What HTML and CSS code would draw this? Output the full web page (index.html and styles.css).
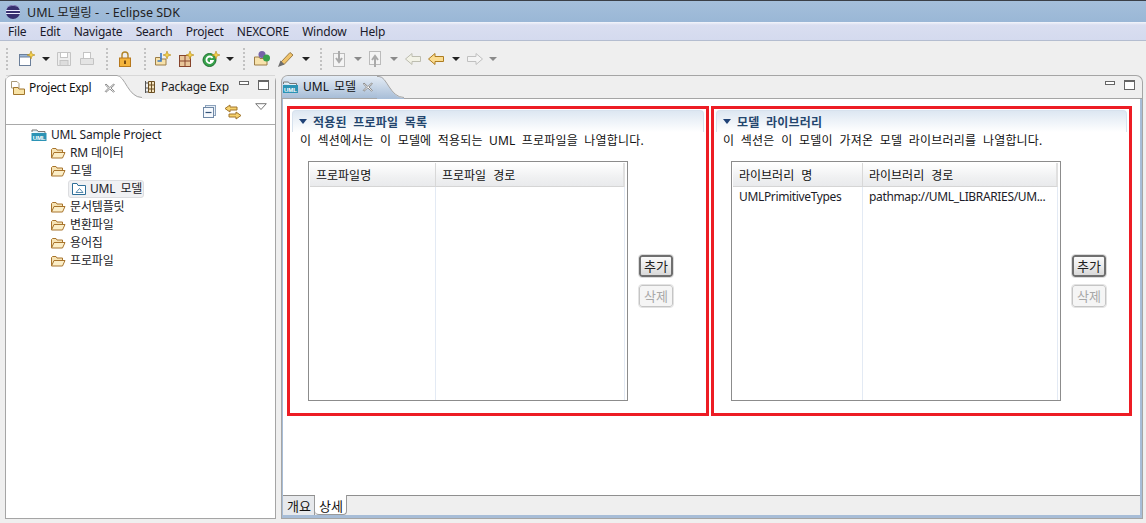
FILE: index.html
```html
<!DOCTYPE html>
<html lang="ko">
<head>
<meta charset="utf-8">
<title>UML 모델링 - Eclipse SDK</title>
<link rel="stylesheet" href="styles.css">
</head>
<body>
<svg class="defs" width="0" height="0">
  <defs>
    <linearGradient id="tabgrad" x1="0" y1="0" x2="0" y2="1"><stop offset="0" stop-color="#e4ecf5"/><stop offset="1" stop-color="#a7bdd7"/></linearGradient>
    <symbol id="folder" viewBox="0 0 16 16">
      <path d="M1.5 13V4.5L2.5 3.5H6L7 5H12.5V7" fill="#f6e3b4" stroke="#a8742c"/>
      <path d="M1.5 13L4 7.5H15L12.5 13Z" fill="#fbeec8" stroke="#a8742c"/>
    </symbol>
    <symbol id="uml" viewBox="0 0 16 16">
      <path d="M1 5V3H6L7 4.5H14V7" fill="#dff0f8" stroke="#777"/>
      <rect x="0.5" y="6" width="15" height="8" fill="#2c93b5"/>
      <text x="8" y="12.6" text-anchor="middle" class="umltxt">UML</text>
    </symbol>
    <symbol id="close" viewBox="0 0 12 12">
      <path d="M2 2L5.8 5.5L9.6 2L10.4 3L7 6L10.4 9.3L9.6 10.2L5.8 7L2 10.2L1.3 9.3L4.6 6L1.3 3Z" fill="#fff" stroke="#8c8c8c"/>
    </symbol>
    <symbol id="arrow" viewBox="0 0 18 16">
      <path d="M1.5 8L8 2.5V5.5H16.5V10.5H8V13.5Z" stroke-width="1"/>
    </symbol>
  </defs>
</svg>

<header class="titlebar">
  <svg class="logo" width="16" height="16" viewBox="0 0 16 16"><circle cx="8" cy="8" r="7" fill="#38306f"/><path d="M1 6.5H15M1 9.5H15" stroke="#eef" stroke-width="1.2"/><path d="M2 3.5C5 0.8 11 0.8 14 3.5" stroke="#8f87c0" fill="none"/></svg>
  <span>UML 모델링 -&nbsp; - Eclipse SDK</span>
</header>

<nav class="menubar">
  <span>File</span><span>Edit</span><span>Navigate</span><span>Search</span><span>Project</span><span>NEXCORE</span><span>Window</span><span>Help</span>
</nav>

<div class="toolbar">
  <i class="grip"></i>
  <svg class="ti first" width="18" height="18" viewBox="0 0 18 18"><rect x="1.5" y="4.5" width="11" height="11" fill="#fff" stroke="#6b7f9a"/><rect x="1.5" y="4.5" width="11" height="2.5" fill="#9db8d8" stroke="#6b7f9a"/><path d="M13 1L14 4L17 5L14 6L13 9L12 6L9 5L12 4Z" fill="#f5d14a" stroke="#b58c1e" stroke-width=".6"/></svg>
  <i class="drop"></i>
  <svg class="ti m7" width="16" height="16" viewBox="0 0 16 16"><path d="M1.5 1.5H14.5V14.5H1.5Z" fill="#eee" stroke="#c4c4c4"/><rect x="4.5" y="1.5" width="7" height="5" fill="#fff" stroke="#c4c4c4"/><rect x="4" y="9.5" width="8" height="5" fill="#ddd" stroke="#c4c4c4"/></svg>
  <svg class="ti" width="16" height="16" viewBox="0 0 16 16"><rect x="4.5" y="1.5" width="7" height="6" fill="#fff" stroke="#c4c4c4"/><path d="M1.5 7.5H14.5V13.5H1.5Z" fill="#e4e4e4" stroke="#c4c4c4"/></svg>
  <i class="grip g2"></i>
  <svg class="ti" width="16" height="18" viewBox="0 0 16 18"><path d="M5 8V5A3 3 0 0 1 11 5V8" fill="none" stroke="#b08428" stroke-width="1.4"/><rect x="2.5" y="8" width="11" height="8.5" fill="#f4b43c" stroke="#b7791d"/><rect x="7" y="10.5" width="2" height="3.5" fill="#7a4d10"/></svg>
  <i class="grip g3"></i>
  <svg class="ti m6" width="18" height="18" viewBox="0 0 18 18"><path d="M1.5 15V7.5H6L7 9H12V15Z" fill="#f7e2ab" stroke="#9c7d46"/><path d="M7 3V11H3.5" fill="none" stroke="#3a78c2" stroke-width="1.6"/><path d="M13 1L14 4L17 5L14 6L13 9L12 6L9 5L12 4Z" fill="#f5d14a" stroke="#b58c1e" stroke-width=".6"/></svg>
  <svg class="ti m8" width="16" height="18" viewBox="0 0 16 18"><rect x="1.5" y="5.5" width="11" height="11" fill="#e8c69a" stroke="#87452c"/><path d="M7 5.5V16.5M1.5 11H12.5" stroke="#87452c"/><path d="M12 1L13 4L16 5L13 6L12 9L11 6L8 5L11 4Z" fill="#f5d14a" stroke="#b58c1e" stroke-width=".6"/></svg>
  <svg class="ti m3" width="18" height="18" viewBox="0 0 18 18"><circle cx="7.5" cy="10" r="6.5" fill="#36a24a" stroke="#1f6e2f"/><path d="M10.5 8A3.3 3.3 0 1 0 10.8 11H8" fill="none" stroke="#fff" stroke-width="1.8"/><path d="M14 1L15 4L18 5L15 6L14 9L13 6L10 5L13 4Z" fill="#f5d14a" stroke="#b58c1e" stroke-width=".6"/></svg>
  <i class="drop"></i>
  <i class="grip g4"></i>
  <svg class="ti m6" width="18" height="18" viewBox="0 0 18 18"><path d="M1.5 15V7H6L7 8.5H14V15Z" fill="#f7e2ab" stroke="#9c7d46"/><circle cx="9" cy="4.5" r="3.5" fill="#7562a8"/><circle cx="13.5" cy="8" r="3.5" fill="#38a04c"/></svg>
  <svg class="ti" width="18" height="18" viewBox="0 0 18 18"><path d="M4 12L13 2.5L16 5L7 14.5Z" fill="#f0c36a" stroke="#9c7d46"/><path d="M1 17L3.5 10.5L7.5 14.5Z" fill="#6e6e6e"/></svg>
  <i class="drop"></i>
  <i class="grip g5"></i>
  <svg class="ti dim" width="16" height="18" viewBox="0 0 16 18"><rect x="2.5" y="3.5" width="11" height="13" fill="#f4f4f4" stroke="#bbb"/><path d="M8 1V11M5 8L8 12L11 8" fill="none" stroke="#aaa" stroke-width="2"/></svg>
  <i class="drop dimd"></i>
  <svg class="ti dim l1" width="16" height="18" viewBox="0 0 16 18"><rect x="2.5" y="1.5" width="11" height="13" fill="#f4f4f4" stroke="#bbb"/><path d="M8 17V7M5 10L8 6L11 10" fill="none" stroke="#aaa" stroke-width="2"/></svg>
  <i class="drop dimd"></i>
  <svg class="ti back-dim" width="18" height="16"><use href="#arrow"/></svg>
  <svg class="ti back" width="18" height="16"><use href="#arrow"/></svg>
  <i class="drop"></i>
  <svg class="ti fwd" width="18" height="16"><use href="#arrow"/></svg>
  <i class="drop dimd"></i>
</div>

<main class="workbench">
  <aside class="pane left">
    <div class="tabhead">
      <div class="tab active">
        <svg class="tabicon" width="16" height="16" viewBox="0 0 16 16"><path d="M1.5 1.5H7L9 3.5V8H1.5Z" fill="#fff" stroke="#a99a7a"/><path d="M3.5 14.5V7.5H8L9 9H14.5V14.5Z" fill="#f8e3a6" stroke="#a0752c"/></svg>
        <span>Project Expl</span>
        <svg class="x" width="12" height="12"><use href="#close"/></svg>
      </div>
      <svg class="curve" width="27" height="24" viewBox="0 0 27 24"><path d="M0 0H2C10 0 13 23 27 23V24H0Z" fill="#fff"/><path d="M0 .5H2C10 .5 13 22.5 27 22.5" fill="none" stroke="#a5a5a5"/></svg>
      <div class="tab other">
        <svg class="tabicon pkg" width="12" height="14" viewBox="0 0 12 14"><path d="M1.5 1V13M1.5 3H4M1.5 8H4M1.5 12H4" stroke="#555" fill="none"/><path d="M4.5 1.5H10.5V12.5H4.5ZM4.5 5H10.5M4.5 9H10.5M7.5 1.5V12.5" fill="#f3e2bd" stroke="#6b4f23"/></svg>
        <span>Package Exp</span>
      </div>
      <div class="winbtns">
        <i class="min"></i><i class="max"></i>
      </div>
    </div>
    <div class="viewbar">
      <svg width="15" height="15" viewBox="0 0 15 15"><rect x="3.5" y="1.5" width="10" height="10" fill="#e6eef7" stroke="#8ca2bb"/><rect x="1.5" y="3.5" width="10" height="10" fill="#f6f9fd" stroke="#6f88a5"/><path d="M3.5 8.5H9.5" stroke="#35547a" stroke-width="1.2"/></svg>
      <svg class="link" width="18" height="16" viewBox="0 0 18 16"><path d="M1 4.5L6 1V3H13V6H6V8Z" fill="#f6d26d" stroke="#a0752c"/><path d="M17 11.5L12 8V10H5V13H12V15Z" fill="#f6d26d" stroke="#a0752c"/></svg>
      <svg class="menu" width="12" height="8" viewBox="0 0 12 8"><path d="M.7 .7H11.3L6 6.5Z" fill="#fff" stroke="#777"/></svg>
    </div>
    <ul class="tree">
      <li class="lv0"><svg width="18" height="16"><use href="#uml"/></svg><span>UML Sample Project</span></li>
      <li class="lv1"><svg width="16" height="16"><use href="#folder"/></svg><span>RM 데이터</span></li>
      <li class="lv1"><svg width="16" height="16"><use href="#folder"/></svg><span>모델</span></li>
      <li class="lv2"><div class="sel"><svg width="16" height="14" viewBox="0 0 16 14"><path d="M1.5 12.5V1.5H6L7 3.5H14.5V12.5Z" fill="#fff" stroke="#2f6f99"/><path d="M5 10.5L8.5 6.5L12 10.5Z" fill="none" stroke="#2f6f99" stroke-width=".8"/></svg><span>UML 모델</span></div></li>
      <li class="lv1"><svg width="16" height="16"><use href="#folder"/></svg><span>문서템플릿</span></li>
      <li class="lv1"><svg width="16" height="16"><use href="#folder"/></svg><span>변환파일</span></li>
      <li class="lv1"><svg width="16" height="16"><use href="#folder"/></svg><span>용어집</span></li>
      <li class="lv1"><svg width="16" height="16"><use href="#folder"/></svg><span>프로파일</span></li>
    </ul>
  </aside>

  <section class="pane editor">
    <div class="tabhead ehead">
      <div class="tab etab">
        <svg class="tabicon" width="17" height="16"><use href="#uml"/></svg>
        <span>UML 모델</span>
        <svg class="x" width="12" height="12"><use href="#close"/></svg>
      </div>
      <svg class="curve" width="27" height="23" viewBox="0 0 27 23"><path d="M0 0H2C10 0 13 22 27 22V23H0Z" fill="url(#tabgrad)"/><path d="M0 .5H2C10 .5 13 21.5 27 21.5" fill="none" stroke="#a5a5a5"/></svg>
      <div class="winbtns ewin"><i class="min"></i><i class="max"></i></div>
    </div>
    <div class="editbody">
      <div class="sections">
        <section class="redbox box1">
          <h2 class="sechead"><i class="twisty"></i>적용된 프로파일 목록</h2>
          <p class="desc">이 섹션에서는 이 모델에 적용되는 UML 프로파일을 나열합니다.</p>
          <div class="rowwrap">
            <div class="table t1">
              <div class="thead"><div class="c1">프로파일명</div><div class="c2">프로파일 경로</div></div>
              <div class="tbody"><div class="c1"></div><div class="c2"></div></div>
            </div>
            <div class="btns"><button class="btn focus">추가</button><button class="btn" disabled>삭제</button></div>
          </div>
        </section>
        <section class="redbox">
          <h2 class="sechead"><i class="twisty"></i>모델 라이브러리</h2>
          <p class="desc">이 섹션은 이 모델이 가져온 모델 라이브러리를 나열합니다.</p>
          <div class="rowwrap">
            <div class="table t2">
              <div class="thead"><div class="c1">라이브러리 명</div><div class="c2">라이브러리 경로</div></div>
              <div class="tbody"><div class="c1">UMLPrimitiveTypes</div><div class="c2">pathmap://UML_LIBRARIES/UM...</div></div>
            </div>
            <div class="btns"><button class="btn focus">추가</button><button class="btn" disabled>삭제</button></div>
          </div>
        </section>
      </div>
      <div class="pagetabs"><span class="ptab">개요</span><span class="ptab on">상세</span></div>
    </div>
  </section>
</main>
</body>
</html>
```

FILE: styles.css
```css
* { box-sizing: border-box; }
html, body { margin: 0; height: 100%; }
body {
  width: 1146px; height: 523px; overflow: hidden;
  background: #efefef; color: #111;
  font: 12px/16px "Noto Sans", "Noto Sans CJK KR", sans-serif;
  display: flex; flex-direction: column;
}
.defs { position: absolute; }
.umltxt { font: bold 6px "Liberation Sans", sans-serif; fill: #fff; }

.titlebar {
  height: 22px; flex: none; display: flex; align-items: center; gap: 6px;
  padding: 1px 0 0 5px; color: #222; font-size: 12.5px;
  border-top: 1px solid #3a3f47;
  background: linear-gradient(#a4bfdb, #9ab7d6);
}
.titlebar span { padding-top: 1px; }
.menubar {
  height: 19px; flex: none; display: flex; gap: 13.3px; align-items: center;
  padding: 1px 0 0 8px; color: #1a1a2a; letter-spacing: -.2px;
  background: linear-gradient(#f3f5fb 0, #d9def0 3px, #d4daee 100%);
  border-bottom: 1px solid #b4bdd0;
}
.toolbar {
  height: 34px; flex: none; display: flex; align-items: center;
  padding: 1px 0 0 6px; background: #efefef;
}
.grip { width: 2px; height: 22px; flex: none; background: repeating-linear-gradient(#c2c2c2 0 2px, transparent 2px 4px); }
.ti { flex: none; margin-right: 4px; }
.ti.first { margin-left: 10px; margin-right: 3px; }
.ti.m3 { margin-right: 3px; }
.ti.m6 { margin-right: 6px; }
.ti.m7 { margin-right: 7px; }
.ti.m8 { margin-right: 8px; }
.ti.l1 { margin-left: -1px; }
.drop { width: 0; height: 0; flex: none; margin: 0 6px 0 3px; border: 4px solid transparent; border-top: 4px solid #222; border-bottom: 0; }
.dimd { border-top-color: #8a8a8a; }
.g2 { margin: 0 9px 0 7px; }
.g3 { margin: 0 8px 0 7px; }
.g4 { margin: 0 8px 0 3px; }
.g5 { margin: 0 9px 0 4px; }
.back-dim { fill: #f2f2e6; stroke: #bdbdb0; margin-right: 5px; }
.back { fill: #fbdc90; stroke: #ad7c20; }
.ti.fwd { fill: #f4f4f4; stroke: #c0c0c0; transform: scaleX(-1); margin-right: 2px; }

.workbench { flex: 1; display: flex; gap: 5px; padding: 0 3px 4px 5px; min-height: 0; }
.pane { display: flex; flex-direction: column; min-width: 0; }
.left { width: 271px; flex: none; border: 1px solid #a5a5a5; border-top: 0; background: #fff; border-radius: 6px 6px 0 0; }
.editor { flex: 1; }

.tabhead { height: 24px; display: flex; align-items: flex-start; background: #efefef; flex: none; position: relative; }
.tab { display: flex; align-items: center; height: 24px; flex: none; }
.active { width: 110px; padding: 0 0 0 4px; background: #fff; border-top: 1px solid #a5a5a5; border-radius: 6px 0 0 0; }
.active span { margin-left: 3px; width: 72px; letter-spacing: -.3px; }
.tabicon { flex: none; }
.curve { flex: none; margin-left: -1px; display: block; }
.other { height: 23px; padding-left: 1px; color: #222; }
.other span { margin-left: 5px; letter-spacing: -.25px; }
.pkg { margin-left: 1px; }
.left .tabhead { box-shadow: inset 0 1px #d8d8d8; }
.left .active .x { margin-left: 3px; }
.winbtns { margin-left: auto; display: flex; gap: 9px; align-items: center; padding: 5px 6px 0 0; }
.min { display: block; width: 10px; height: 4px; border: 1px solid #666; background: #fff; margin-bottom: 5px; }
.max { display: block; width: 11px; height: 10px; border: 1px solid #666; border-top-width: 2px; background: #fff; }

.viewbar { height: 26px; flex: none; display: flex; align-items: center; justify-content: flex-end; padding: 0 8px 0 0; gap: 7px; background: #fff; border-bottom: 1px solid #a9a9a9; }
.viewbar .menu { margin: 0 0 10px 6px; }

.tree { list-style: none; margin: 0; padding: 0; flex: 1; background: #fff; }
.tree li { height: 18px; display: flex; align-items: center; gap: 3px; white-space: nowrap; color: #1c1c28; letter-spacing: -.15px; }
.tree .lv0 { height: 19px; padding-left: 24px; }
.lv1 { padding-left: 44px; }
.lv1 span { margin-left: 1px; }
.lv2 { padding-left: 62px; }
.sel { display: flex; align-items: center; gap: 3px; height: 18px; padding: 0 1px 0 2px; background: #f0f1f3; border: 1px solid #dcdde0; border-radius: 3px; word-spacing: 2px; }

.ehead { height: 23px; background: #efefef; border-top: 1px solid #a5a5a5; border-radius: 7px 7px 0 0; border-right: 1px solid #a5a5a5; }
.etab { height: 22px; width: 97px; background: linear-gradient(#e4ecf5, #a7bdd7); border-left: 1px solid #a5a5a5; border-radius: 6px 0 0 0; }
.etab span { margin-left: 4px; word-spacing: 2px; }
.etab .x { margin-left: 6px; }
.ehead .winbtns { padding: 4px 7px 0 0; }

.editbody {
  flex: 1; display: flex; flex-direction: column; min-height: 0;
  border: solid #a7bdd7; border-width: 1px 3px 4px 2px;
  background: #fff; outline: 1px solid #a5a5a5; outline-offset: -1px;
  border-top-color: #a5a5a5; padding-top: 2px;
}
.sections { flex: 1; display: flex; gap: 2px; padding: 5px 5px 0 4px; align-items: flex-start; }
.redbox { width: 421px; height: 310px; border: 3px solid #ed1c24; padding: 1px 2px; flex: none; }
.box1 { width: 422px; }
.sechead {
  margin: 0; height: 22px; display: flex; align-items: center; gap: 6px; padding: 0 0 0 5px;
  font: bold 12px/16px "Noto Sans CJK KR", sans-serif; color: #24466e;
  letter-spacing: .2px; word-spacing: 3px;
  border: 1px solid #d7e2ee; border-bottom: 0; border-radius: 4px 4px 0 0;
  background: linear-gradient(#dde7f2, #fff);
}
.twisty { width: 0; height: 0; border: 4px solid transparent; border-top: 5px solid #1f4277; border-bottom: 0; margin-left: 1px; }
.desc { margin: 0; padding: 1px 0 0 7px; height: 29px; color: #111; white-space: nowrap; letter-spacing: .2px; word-spacing: 3.3px; }
.box1 .desc { padding-left: 8px; word-spacing: 3px; }
.rowwrap { display: flex; padding-left: 15px; }
.box1 .rowwrap { padding-left: 16px; }
.table { height: 240px; border: 1px solid #8c8c8c; display: flex; flex-direction: column; background: #fff; padding: 1px 2px 0 1px; }
.t1 { width: 320px; }
.t2 { width: 330px; }
.thead { height: 24px; display: flex; flex: none; align-items: stretch; background: linear-gradient(#fff, #f0f1f2 60%, #e9eaec); border-bottom: 1px solid #d5d5d5; border-right: 2px solid #e0e0e0; word-spacing: 4px; }
.thead div { display: flex; align-items: center; padding: 2px 0 0 6px; }
.tbody { flex: 1; display: flex; }
.tbody div { padding: 2px 0 0 6px; white-space: nowrap; color: #1c1c28; letter-spacing: -.35px; }
.c1 { width: 126px; flex: none; border-right: 1px solid #e3eaf4; }
.c2 { flex: 1; border-right: 1px solid #e3eaf4; min-width: 0; }
.thead .c1 { border-right-color: #d8d8d8; }
.thead .c2 { border-right: 0; }
.t2 .c1 { width: 130px; }
.btns { display: flex; flex-direction: column; gap: 8px; margin: 94px 0 0 11px; }
.btn {
  width: 34px; height: 22px; padding: 0; font: 13px/16px "Noto Sans CJK KR", sans-serif; color: #222;
  background: linear-gradient(#fafafa, #ebebeb 50%, #d9d9d9); border: 1px solid #ababab; border-radius: 3px;
}
.btn.focus { border: 2px solid #6f6f6f; outline: 1px solid #dcdcdc; }
.btn:disabled { color: #a8a8a8; background: #f5f5f5; border: 1px solid #c5c5c5; outline: 1px solid #e3e3e3; }

.pagetabs { height: 20px; flex: none; display: flex; background: #efefef; border-top: 1px solid #8f8f8f; align-items: flex-start; }
.ptab { height: 19px; padding: 1px 3px 0 4px; line-height: 17px; font-size: 13px; border-right: 1px solid #9a9a9a; background: #e7e9ec; font-family: "Noto Sans CJK KR", sans-serif; }
.ptab.on { background: #fff; margin-top: -1px; height: 20px; padding-top: 2px; border-bottom: 1px solid #9a9a9a; border-radius: 0 0 4px 4px; }
```
